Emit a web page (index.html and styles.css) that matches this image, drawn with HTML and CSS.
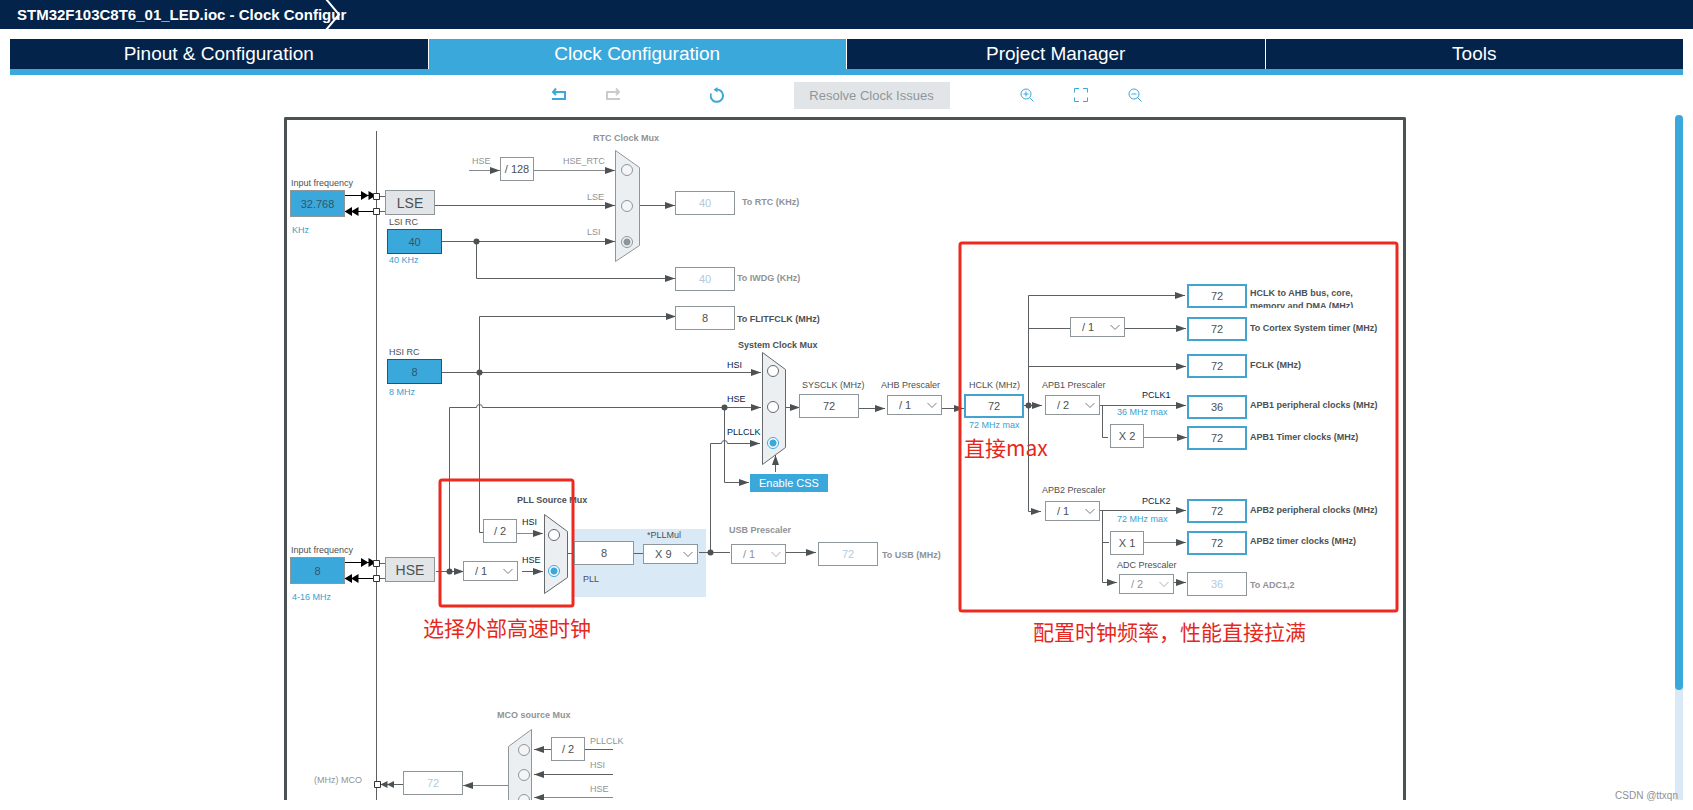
FILE: index.html
```html
<!DOCTYPE html>
<html lang="en">
<head>
<meta charset="utf-8">
<title>STM32F103C8T6_01_LED.ioc - Clock Configuration</title>
<link rel="stylesheet" href="styles.css">
</head>
<body>
<header class="crumbs">
  <h1 class="crumb">STM32F103C8T6_01_LED.ioc - Clock Configur</h1>
  <svg class="crumb-arrow" width="16" height="29" viewBox="0 0 16 29" aria-hidden="true"><path d="M1 -1 14 14.5 1 30"/></svg>
</header>

<nav class="tabs">
  <button class="tab" type="button">Pinout &amp; Configuration</button>
  <button class="tab tab-active" type="button">Clock Configuration</button>
  <button class="tab" type="button">Project Manager</button>
  <button class="tab" type="button">Tools</button>
</nav>

<div class="toolbar">
  <div class="tools">
    <button class="tool" type="button" aria-label="Undo"><svg width="14" height="16" viewBox="0 0 14 16"><path class="thick" d="M2 5H13V12H0M4 1.500 1 5 4 8"/></svg></button>
    <button class="tool tool-off" type="button" aria-label="Redo" disabled><svg width="14" height="16" viewBox="0 0 14 16"><path class="thick" d="M12 5H1V12H14M10 1.500 13 5 10 8"/></svg></button>
  </div>
  <button class="tool tool-reset" type="button" aria-label="Reset"><svg width="14" height="16" viewBox="0 0 14 16"><path class="thick" d="M6 2.500A6.200 6.200 0 1 1 1 6.500"/><path class="solid" d="M7.500 0V5.500L3.500 2.700Z"/></svg></button>
  <button class="resolve" type="button" disabled>Resolve Clock Issues</button>
  <div class="tools">
    <button class="tool" type="button" aria-label="Zoom in"><svg width="14" height="16" viewBox="0 0 14 16"><circle cx="6" cy="7" r="5"/><path d="M9.500 10.500 13.500 14.500M3.500 7H8.500M6 4.500V9.500"/></svg></button>
    <button class="tool" type="button" aria-label="Fit to window"><svg width="14" height="16" viewBox="0 0 14 16"><path d="M.5 5.500V1.500H5M9 1.500H13.500V5.500M13.500 10.500V14.500H9M5 14.500H.5V10.500"/></svg></button>
    <button class="tool" type="button" aria-label="Zoom out"><svg width="14" height="16" viewBox="0 0 14 16"><circle cx="6" cy="7" r="5"/><path d="M9.500 10.500 13.500 14.500M3.500 7H8.500"/></svg></button>
  </div>
</div>

<main class="work">
  <div class="viewport">
    <div class="canvas">
      <svg class="wiring" width="1116" height="680" viewBox="287 120 1116 680">
        <defs>
          <marker id="arrow" markerUnits="userSpaceOnUse" markerWidth="10" markerHeight="8" refX="10" refY="4" orient="auto"><path class="head" d="M0 .5 10 4 0 7.500Z"/></marker>
          <path id="chevron" class="chevron" d="M-4.500 -2 0 2.500 4.500 -2"/>
          <g id="pins">
            <path class="black" d="M345 195.500H374M345 211.500H374"/>
            <path class="wire" d="M380 196.500H385M380 211.500H385"/>
            <path class="black-fill" d="M361 191 368.500 195.500 361 200ZM368.500 191 376 195.500 368.500 200ZM352 207 344.500 211.500 352 216ZM358.500 207 351 211.500 358.500 216Z"/>
            <path class="pin" d="M373.500 193.500H379.500V199.500H373.500ZM373.500 208.500H379.500V214.500H373.500Z"/>
          </g>
          <clipPath id="ahb-clip"><path d="M1240 280H1400V308H1240Z"/></clipPath>
        </defs>

        <path class="pll-area" d="M574 529H706V597H574Z"/>
        <path class="paper" d="M643 544H698V564H643Z"/>

        <path class="wire" d="M376.500 131V800"/>
        <use href="#pins"/>
        <use href="#pins" y="367"/>

        <g class="wire arrowed">
          <path class="soft" d="M469 170.500H500"/>
          <path class="soft" d="M534 170.500H615"/>
          <path d="M435 205.500H615"/>
          <path d="M442 241.500H615"/>
          <path d="M476.500 241.500V278.500H675"/>
          <path d="M640 205.500H675"/>
          <path d="M479.500 372.500V316.500H676"/>
          <path d="M442 372.500H761"/>
          <path d="M449.500 571.500V407.500H476.500A3 3 0 0 1 482.500 407.500H761"/>
          <path d="M724.500 407.500V482.500H749"/>
          <path d="M710.500 552.500V443.500H721.500A3 3 0 0 1 727.500 443.500H760"/>
          <path d="M775.500 472V455"/>
          <path d="M786 407.500H800"/>
          <path d="M859 408.500H885"/>
          <path d="M942 408.500H964"/>
          <path d="M1024 405.500H1042"/>
          <path d="M1028.500 405.500V295.500H1185"/>
          <path d="M1125 328.500H1186"/>
          <path d="M1028.500 366.500H1186"/>
          <path d="M1028.500 405.500V511.500H1041"/>
          <path d="M1100 405.500H1186"/>
          <path class="soft" d="M1144 437.500H1187"/>
          <path d="M1100 510.500H1186"/>
          <path class="soft" d="M1144 542.500H1186"/>
          <path d="M1102.500 510.500V582.500H1117"/>
          <path d="M1174 582.500H1186"/>
          <path class="soft" d="M517 533.500H543"/>
          <path d="M436 571.500H464"/>
          <path d="M522 571.500H543"/>
          <path d="M786 552.500H816"/>
          <path class="soft" d="M508 785.500H463"/>
          <path d="M551 749.500H534"/>
          <path d="M613 774.500H534"/>
          <path class="soft" d="M613 797.500H534"/>
        </g>
        <g class="wire">
          <path d="M479.500 372.500V532.500H483M1028.500 328.500H1070M1102.500 405.500V437.500H1108M1102.500 542.500H1109"/>
          <path d="M568 553.500H574M634 553.500H643M699 552.500H730M585 749.500H613M403 784.500H381"/>
        </g>
        <g class="head">
          <circle cx="476.500" cy="241.500" r="3"/><circle cx="479.500" cy="372.500" r="3"/><circle cx="724.500" cy="407.500" r="3"/>
          <circle cx="449.500" cy="571.500" r="3"/><circle cx="710.500" cy="552.500" r="3"/><circle cx="1028.500" cy="405.500" r="3"/>
          <path d="M387.500 781 380.500 784.500 387.500 788ZM394 781 387 784.500 394 788Z"/>
        </g>
        <path class="pin" d="M374.500 781.500H380.500V787.500H374.500Z"/>

        <path class="mux mux-off" d="M615.500 150.500 639.500 167.500V245.500L615.500 261.500Z"/>
        <path class="mux" d="M762.500 352.500 785.500 369.500V447.500L762.500 464.500Z"/>
        <path class="mux" d="M544.500 514.500 567.500 531.500V577.500L544.500 593.500Z"/>
        <path class="mux mux-off" d="M531.500 729.500 508.500 746.500V810H531.500Z"/>

        <use href="#chevron" x="932" y="405"/><use href="#chevron" x="508" y="571"/><use href="#chevron" x="688" y="554"/>
        <use href="#chevron" x="1115" y="327"/><use href="#chevron" x="1090" y="405"/><use href="#chevron" x="1090" y="511"/>
        <use class="faint" href="#chevron" x="776" y="554"/><use class="faint" href="#chevron" x="1164" y="584"/>

        <g class="text">
          <text x="291" y="186">Input frequency</text><text x="291" y="553">Input frequency</text>
          <text x="389" y="225">LSI RC</text><text x="389" y="355">HSI RC</text>
          <text x="802" y="388">SYSCLK (MHz)</text><text x="881" y="388">AHB Prescaler</text>
          <text x="969" y="388">HCLK (MHz)</text><text x="1042" y="388">APB1 Prescaler</text>
          <text x="1042" y="493">APB2 Prescaler</text><text x="1117" y="568">ADC Prescaler</text>
          <text x="647" y="538">*PLLMul</text><text x="583" y="582">PLL</text>
        </g>
        <g class="text text-hint">
          <text x="292" y="233">KHz</text><text x="292" y="600">4-16 MHz</text><text x="389" y="263">40 KHz</text><text x="389" y="395">8 MHz</text>
          <text x="969" y="428">72 MHz max</text><text x="1117" y="415">36 MHz max</text><text x="1117" y="522">72 MHz max</text>
        </g>
        <g class="text text-off">
          <text x="472" y="164">HSE</text><text x="563" y="164">HSE_RTC</text><text x="587" y="200">LSE</text><text x="587" y="235">LSI</text>
          <text x="314" y="783">(MHz) MCO</text><text x="590" y="744">PLLCLK</text><text x="590" y="768">HSI</text><text x="590" y="792">HSE</text>
        </g>
        <g class="text text-signal">
          <text x="727" y="368">HSI</text><text x="727" y="402">HSE</text><text x="727" y="435">PLLCLK</text>
          <text x="522" y="525">HSI</text><text x="522" y="563">HSE</text><text x="1142" y="398">PCLK1</text><text x="1142" y="504">PCLK2</text>
        </g>
        <g class="text text-name">
          <text x="737" y="322">To FLITFCLK (MHz)</text><text x="738" y="348">System Clock Mux</text><text x="517" y="503">PLL Source Mux</text>
          <g clip-path="url(#ahb-clip)"><text x="1250" y="296">HCLK to AHB bus, core,</text><text x="1250" y="309">memory and DMA (MHz)</text></g>
          <text x="1250" y="331">To Cortex System timer (MHz)</text><text x="1250" y="368">FCLK (MHz)</text>
          <text x="1250" y="408">APB1 peripheral clocks (MHz)</text><text x="1250" y="440">APB1 Timer clocks (MHz)</text>
          <text x="1250" y="513">APB2 peripheral clocks (MHz)</text><text x="1250" y="544">APB2 timer clocks (MHz)</text>
        </g>
        <g class="text text-name text-off">
          <text x="593" y="141">RTC Clock Mux</text><text x="742" y="205">To RTC (KHz)</text><text x="737" y="281">To IWDG (KHz)</text>
          <text x="729" y="533">USB Prescaler</text><text x="882" y="558">To USB (MHz)</text><text x="1250" y="588">To ADC1,2</text><text x="497" y="718">MCO source Mux</text>
        </g>

        <rect class="mark" x="440" y="480" width="133" height="126" rx="2"/>
        <rect class="mark" x="960" y="243" width="437" height="368" rx="2"/>
        <g class="note"><text x="423" y="636">选择外部高速时钟</text><text x="964" y="456">直接max</text><text x="1033" y="640">配置时钟频率，性能直接拉满</text></g>
      </svg>

      <input class="node source outer lse-in" aria-label="LSE input frequency" value="32.768">
      <input class="node source outer hse-in" aria-label="HSE input frequency" value="8">
      <input class="node source lsi-rc" aria-label="LSI RC" value="40" readonly>
      <input class="node source hsi-rc" aria-label="HSI RC" value="8" readonly>
      <button class="node osc lse" type="button">LSE</button>
      <button class="node osc hse" type="button">HSE</button>

      <span class="node factor rtc-div">/ 128</span>
      <span class="node factor hsi-div">/ 2</span>
      <span class="node factor tim1-mul">X 2</span>
      <span class="node factor tim2-mul">X 1</span>
      <span class="node factor mco-div">/ 2</span>

      <input class="node value off to-rtc" aria-label="To RTC (KHz)" value="40" readonly>
      <input class="node value off to-iwdg" aria-label="To IWDG (KHz)" value="40" readonly>
      <input class="node value to-flitf" aria-label="To FLITFCLK (MHz)" value="8" readonly>
      <input class="node value sysclk" aria-label="SYSCLK (MHz)" value="72">
      <input class="node value pll-in" aria-label="PLL input" value="8" readonly>
      <input class="node value off to-usb" aria-label="To USB (MHz)" value="72" readonly>
      <input class="node value off mco" aria-label="(MHz) MCO" value="72" readonly>
      <input class="node value goal hclk" aria-label="HCLK (MHz)" value="72">
      <input class="node value goal out ahb-bus" aria-label="HCLK to AHB bus, core, memory and DMA (MHz)" value="72">
      <input class="node value goal out cortex" aria-label="To Cortex System timer (MHz)" value="72">
      <input class="node value goal out fclk" aria-label="FCLK (MHz)" value="72">
      <input class="node value goal out apb1" aria-label="APB1 peripheral clocks (MHz)" value="36">
      <input class="node value goal out apb1-tim" aria-label="APB1 Timer clocks (MHz)" value="72">
      <input class="node value goal out apb2" aria-label="APB2 peripheral clocks (MHz)" value="72">
      <input class="node value goal out apb2-tim" aria-label="APB2 timer clocks (MHz)" value="72">
      <input class="node value off out adc" aria-label="To ADC1,2" value="36" readonly>

      <select class="node pick ahb-div" aria-label="AHB Prescaler"><option>/ 1</option></select>
      <select class="node pick hse-div" aria-label="HSE divider"><option>/ 1</option></select>
      <select class="node pick pll-mul" aria-label="PLLMul"><option>X 9</option></select>
      <select class="node pick pick-off usb-div" aria-label="USB Prescaler"><option>/ 1</option></select>
      <select class="node pick cortex-div" aria-label="Cortex prescaler"><option>/ 1</option></select>
      <select class="node pick apb1-div" aria-label="APB1 Prescaler"><option>/ 2</option></select>
      <select class="node pick apb2-div" aria-label="APB2 Prescaler"><option>/ 1</option></select>
      <select class="node pick pick-off adc-div" aria-label="ADC Prescaler"><option>/ 2</option></select>

      <fieldset class="node mux-inputs rtc-mux" aria-label="RTC Clock Mux">
        <input class="radio radio-off" type="radio" name="rtc" aria-label="HSE_RTC">
        <input class="radio radio-off" type="radio" name="rtc" aria-label="LSE">
        <input class="radio radio-off" type="radio" name="rtc" aria-label="LSI" checked>
      </fieldset>
      <fieldset class="node mux-inputs sys-mux" aria-label="System Clock Mux">
        <input class="radio" type="radio" name="sys" aria-label="HSI">
        <input class="radio" type="radio" name="sys" aria-label="HSE">
        <input class="radio" type="radio" name="sys" aria-label="PLLCLK" checked>
      </fieldset>
      <fieldset class="node mux-inputs pll-mux" aria-label="PLL Source Mux">
        <input class="radio" type="radio" name="pll" aria-label="HSI">
        <input class="radio" type="radio" name="pll" aria-label="HSE" checked>
      </fieldset>
      <fieldset class="node mux-inputs mco-mux" aria-label="MCO source Mux">
        <input class="radio radio-off" type="radio" name="mco" aria-label="PLLCLK / 2">
        <input class="radio radio-off" type="radio" name="mco" aria-label="HSI">
        <input class="radio radio-off" type="radio" name="mco" aria-label="HSE">
      </fieldset>

      <button class="node css-button" type="button">Enable CSS</button>
    </div>
  </div>
  <div class="scrollbar"><div class="thumb"></div></div>
</main>
<p class="watermark">CSDN @ttxqn</p>
</body>
</html>
```

FILE: styles.css
```css
:root {
  --navy: #03234b;
  --blue: #3ba8db;
  --ink: #4c5153;
  --line: #8f9699;
  --muted: #909396;
  --pale: #dae9f6;
}

* { box-sizing: border-box; }

body {
  display: flex;
  flex-direction: column;
  height: 100vh;
  margin: 0;
  padding-bottom: 10px;
  overflow: hidden;
  background: #fff;
  color: var(--ink);
  font-family: "Liberation Sans", Arial, "Noto Sans CJK SC", sans-serif;
}

button, input, select {
  margin: 0;
  padding: 0;
  border: 0;
  border-radius: 0;
  font-family: inherit;
  appearance: none;
}

/* Title strip */
.crumbs {
  display: grid;
  grid-template-columns: max-content;
  flex: none;
  align-items: center;
  height: 29px;
  padding-left: 17px;
  background: var(--navy);
}
.crumb, .crumb-arrow { grid-area: 1 / 1; }
.crumb {
  margin: 0;
  color: #fff;
  font-size: 15px;
  line-height: 27px;
  white-space: pre;
}
.crumb-arrow {
  justify-self: end;
  margin-right: 5px;
  fill: none;
  stroke: #fff;
  stroke-width: 2;
}

/* Tabs */
.tabs {
  display: grid;
  grid-template-columns: repeat(4, 1fr);
  flex: none;
  column-gap: 1px;
  margin: 10px 10px 0;
  border-bottom: 6px solid var(--blue);
}
.tab {
  height: 30px;
  background: var(--navy);
  color: #fff;
  font-size: 19px;
  line-height: 30px;
}
.tab-active { background: var(--blue); }

/* Toolbar */
.toolbar {
  display: flex;
  flex: none;
  align-items: center;
  justify-content: center;
  gap: 70px;
  height: 40px;
}
.tools { display: flex; gap: 40px; }
.tool { width: 14px; height: 16px; background: none; }
.tool-reset { margin-left: 20px; }
.tool svg {
  display: block;
  fill: none;
  stroke: var(--blue);
  stroke-width: 1;
}
.tool .thick { stroke-width: 2; }
.tool .solid { fill: var(--blue); stroke: none; }
.tool-off svg { stroke: #c9cccf; }
.resolve {
  width: 156px;
  height: 27px;
  background: #e1e5e8;
  color: #8f979c;
  font-size: 13px;
}

/* Work area */
.work {
  display: flex;
  flex: 1;
  min-height: 0;
  margin: 0 10px;
}
.viewport {
  display: flex;
  flex: 1;
  justify-content: center;
  padding: 2px 0 0 5px;
  overflow: hidden;
}
.canvas {
  position: relative;
  flex: none;
  align-self: flex-start;
  border: 3px solid var(--ink);
  border-bottom: 0;
  border-radius: 2px 2px 0 0;
}
.scrollbar { width: 8px; border-radius: 4px 4px 0 0; background: var(--pale); }
.thumb { height: 84%; border-radius: 4px; background: var(--blue); }

/* Wiring */
.wiring { display: block; overflow: hidden; }
.wire { fill: none; stroke: #5c6062; stroke-width: 1; }
.arrowed path { marker-end: url(#arrow); }
.soft { stroke: #85898b; }
.head { fill: var(--ink); stroke: none; }
.black { stroke: #000; }
.black-fill { fill: #000; }
.pin { fill: #fff; stroke: #333; }
.pll-area { fill: var(--pale); }
.paper { fill: #fff; }
.mux { fill: #ebeff2; stroke: #66696b; }
.mux-off { stroke: var(--line); }
.chevron { fill: none; stroke: #777b7e; stroke-width: 1; }
.faint { opacity: 0.6; }
.text { fill: var(--ink); font-size: 9px; }
.text-hint { fill: #3ba0cf; }
.text-signal { fill: var(--navy); }
.text-name { font-weight: bold; }
.text-off { fill: var(--muted); }
.mark { fill: none; stroke: #ee2a20; stroke-width: 3; }
.note {
  fill: #e5281c;
  font-family: "Noto Sans CJK SC", sans-serif;
  font-size: 21px;
}

/* Diagram nodes */
.node { position: absolute; }
.source {
  width: 55px;
  height: 25px;
  border: 1px solid #2f5363;
  background: var(--blue);
  color: #31566b;
  font-size: 11px;
  text-align: center;
}
.outer { height: 27px; border-color: var(--line); }
.osc {
  width: 50px;
  height: 25px;
  border: 1px solid var(--line);
  background: #e1e5e8;
  color: var(--ink);
  font-size: 14px;
}
.factor {
  width: 34px;
  height: 24px;
  border: 1px solid var(--line);
  background: #fff;
  font-size: 11px;
  line-height: 22px;
  text-align: center;
}
.value {
  width: 60px;
  height: 24px;
  border: 1px solid var(--line);
  background: #fff;
  color: var(--ink);
  font-size: 11px;
  text-align: center;
}
.off { color: #b3cadc; }
.goal { border: 2px solid #43a5cf; }
.pick {
  width: 55px;
  height: 20px;
  padding-left: 11px;
  border: 1px solid var(--line);
  background: none;
  color: var(--ink);
  font-size: 11px;
}
.pick-off { color: var(--muted); }
.mux-inputs {
  display: flex;
  flex-direction: column;
  gap: 24px;
  margin: 0;
  padding: 0;
  border: 0;
}
.radio {
  display: block;
  width: 12px;
  height: 12px;
  border: 1px solid #66696b;
  border-radius: 50%;
  background: #fff;
}
.radio:checked {
  border-color: var(--blue);
  background: radial-gradient(circle, var(--blue) 3px, #fff 4px);
}
.radio-off { border-color: var(--line); background: #f3f5f7; }
.radio-off:checked {
  border-color: var(--line);
  background: radial-gradient(circle, var(--line) 3px, #f3f5f7 4px);
}
.css-button {
  width: 78px;
  height: 18px;
  background: var(--blue);
  color: #fff;
  font-size: 11px;
}

/* Node places on the canvas */
.lse-in { left: 3px; top: 70px; }
.hse-in { left: 3px; top: 437px; }
.lsi-rc { left: 100px; top: 109px; }
.hsi-rc { left: 100px; top: 239px; }
.lse { left: 98px; top: 70px; }
.hse { left: 98px; top: 437px; }
.rtc-div { left: 213px; top: 37px; }
.hsi-div { left: 196px; top: 399px; }
.tim1-mul { left: 823px; top: 304px; }
.tim2-mul { left: 823px; top: 411px; }
.mco-div { left: 264px; top: 617px; }
.to-rtc { left: 388px; top: 71px; }
.to-iwdg { left: 388px; top: 147px; }
.to-flitf { left: 388px; top: 186px; }
.sysclk { left: 512px; top: 274px; }
.hclk { left: 677px; top: 274px; }
.pll-in { left: 287px; top: 421px; }
.to-usb { left: 531px; top: 422px; }
.mco { left: 116px; top: 651px; }
.out { left: 900px; }
.ahb-bus { top: 164px; }
.cortex { top: 197px; }
.fclk { top: 234px; }
.apb1 { top: 275px; }
.apb1-tim { top: 306px; }
.apb2 { top: 379px; }
.apb2-tim { top: 411px; }
.adc { top: 452px; }
.ahb-div { left: 600px; top: 275px; }
.hse-div { left: 176px; top: 441px; }
.pll-mul { left: 356px; top: 424px; }
.usb-div { left: 444px; top: 424px; }
.cortex-div { left: 783px; top: 197px; }
.apb1-div { left: 758px; top: 275px; }
.apb2-div { left: 758px; top: 381px; }
.adc-div { left: 832px; top: 454px; }
.rtc-mux { left: 334px; top: 44px; }
.sys-mux { left: 480px; top: 245px; }
.pll-mux { left: 261px; top: 409px; }
.mco-mux { left: 231px; top: 624px; gap: 13px; }
.css-button { left: 463px; top: 354px; }

.watermark {
  position: absolute;
  right: 15px;
  bottom: 8px;
  margin: 0;
  color: #909090;
  font-size: 10px;
  line-height: 12px;
}
```
